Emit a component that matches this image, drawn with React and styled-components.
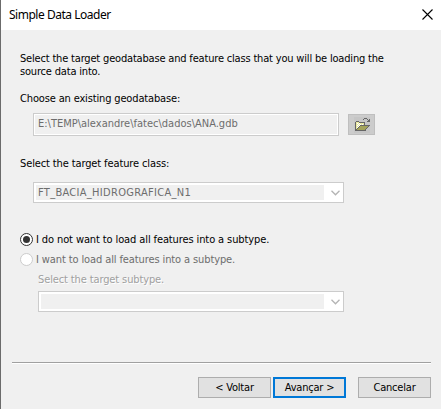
import React from 'react';
import styled, { createGlobalStyle } from 'styled-components';

const GlobalStyle = createGlobalStyle`
  * { box-sizing: border-box; }
  body { margin: 0; background: #f0f0f0; }
`;

const Dialog = styled.main`
  width: 441px;
  height: 409px;
  border-left: 1px solid #6b6b6b;
  background: #f0f0f0;
  color: #000;
  font: 11px/13px "DejaVu Sans Condensed", "DejaVu Sans", sans-serif;
  overflow: hidden;
`;

const TitleBar = styled.header`
  display: flex;
  justify-content: space-between;
  align-items: center;
  height: 30px;
  padding: 0 8px;
  background: #fff;
`;

const Title = styled.h1`
  margin: 0;
  font: 400 12px/16px "Noto Sans", sans-serif;
  letter-spacing: -0.48px;
  white-space: nowrap;
`;

const CloseButton = styled.button`
  display: flex;
  width: 11px;
  height: 11px;
  margin: -1px 0 0 0;
  padding: 0;
  border: 0;
  background: none;
`;

const Content = styled.section`
  height: 332px;
  padding: 22px 0 0 19px;
`;

const Text = styled.div`
  height: 13px;
  white-space: nowrap;
  letter-spacing: ${(p) => p.$spacing || 0}px;
`;

const FieldLabel = styled(Text)`
  margin-top: ${(p) => p.$top}px;
`;

const PathRow = styled.div`
  display: flex;
  align-items: center;
  gap: 9px;
  margin: 8px 0 0 13px;
`;

const PathField = styled.div`
  width: 306px;
  height: 23px;
  padding: 3px 0 0 4px;
  border: 1px solid #ccc;
  background: #f0f0f0;
  box-shadow: inset 0 0 0 1px #fff;
  color: #6d6d6d;
`;

const BrowseButton = styled.button`
  display: flex;
  align-items: center;
  justify-content: center;
  width: 27px;
  height: 21px;
  padding: 0;
  border: 1px solid #bfbfbf;
  background: #ccc;
`;

const Combo = styled.div`
  display: flex;
  width: ${(p) => p.$width}px;
  height: 21px;
  margin: ${(p) => p.$margin};
  padding: 2px 0 2px 2px;
  border: 1px solid #ccc;
  background: #fff;
  color: #6d6d6d;
`;

const ComboValue = styled.div`
  flex: 1;
  padding: 1px 0 0 2px;
  background: #f0f0f0;
`;

const ComboArrow = styled.div`
  display: flex;
  align-items: center;
  justify-content: center;
  width: 19px;
  padding-left: 3px;
`;

const RadioRow = styled.div`
  display: flex;
  align-items: center;
  gap: 3px;
  height: 13px;
  margin-top: ${(p) => p.$top}px;
  color: ${(p) => (p.$disabled ? '#6d6d6d' : '#000')};
`;

const Radio = styled.span`
  display: grid;
  place-items: center;
  width: 13px;
  height: 13px;
  border: 1px solid ${(p) => (p.$disabled ? '#ccc' : '#333')};
  border-radius: 50%;
  background: #fff;
  &::after {
    content: '';
    width: 7px;
    height: 7px;
    border-radius: 50%;
    background: ${(p) => (p.$checked ? '#333' : 'transparent')};
  }
`;

const SubtypeLabel = styled(Text)`
  margin: 7px 0 0 18px;
  color: #a0a0a0;
  text-shadow: 1px 1px 0 #fff;
`;

const Footer = styled.footer`
  display: flex;
  gap: 2px;
  width: 419px;
  margin-left: 11px;
  padding-top: 14px;
  border-top: 1px solid #a0a0a0;
  box-shadow: inset 0 1px 0 #fff;
  justify-content: flex-end;
`;

const Button = styled.button`
  width: 73px;
  height: 21px;
  padding: 0;
  margin-left: ${(p) => p.$left || 0}px;
  border: ${(p) => (p.$primary ? '2px solid #0078d7' : '1px solid #adadad')};
  background: #e1e1e1;
  color: #000;
  font: inherit;
  line-height: 13px;
  letter-spacing: -0.2px;
  white-space: nowrap;
`;

const Chevron = () => (
  <svg width="9" height="6" viewBox="0 0 9 6" fill="none" stroke="#b4b4b4" strokeWidth="1.3">
    <path d="M.5 .8 4.5 4.8 8.5 .8" />
  </svg>
);

const FolderIcon = () => (
  <svg width="16" height="16" viewBox="0 0 16 16" shapeRendering="crispEdges">
    <path fill="#c6c6c6" d="M0 0h16v16H0z" />
    <path fill="#e9e9a0" d="M2 5h3v1h6v3H6l-4 4z" />
    <path fill="#fff" d="M3 6h1v1H3zM5 6h1v1H5zM4 7h1v1H4zM6 7h1v1H6zM8 7h1v1H8zM3 8h1v1H3zM5 8h1v1H5zM7 8h1v1H7zM4 9h1v1H4zM3 10h1v1H3z" />
    <path fill="#a3a35a" d="M6 9h9v1h-1v1h-1v1h-1v1H2v-1h1v-1h1v-1h2z" />
    <path fill="#666" d="M2 4h3v1H2zM1 5h1v9H1zM5 5h6v1H5zM10 6h1v2h-1zM6 8h10v1H6zM5 9h1v1H5zM4 10h1v1H4zM3 11h1v1H3zM2 12h1v1H2zM15 9h-1v1h1zM13 10h1v1h-1zM12 11h1v1h-1zM11 12h1v1h-1zM2 13h10v1H2zM9 2h1v1H9zM10 1h3v1h-3zM13 2h1v1h-1zM14 3h1v1h-1zM15 2h1v3h-1zM13 4h2v1h-2z" />
  </svg>
);

export default function App() {
  return (
    <>
      <GlobalStyle />
      <Dialog>
        <TitleBar>
          <Title>Simple Data Loader</Title>
          <CloseButton aria-label="Close">
            <svg width="11" height="11" viewBox="0 0 11 11" stroke="#000" strokeWidth="1.1">
              <path d="M.5 .5 10.5 10.5M10.5 .5 .5 10.5" />
            </svg>
          </CloseButton>
        </TitleBar>
        <Content>
          <Text $spacing={-0.18}>Select the target geodatabase and feature class that you will be loading the</Text>
          <Text $spacing={-0.18}>source data into.</Text>
          <FieldLabel $top={14} $spacing={-0.15}>Choose an existing geodatabase:</FieldLabel>
          <PathRow>
            <PathField><Text>E:\TEMP\alexandre\fatec\dados\ANA.gdb</Text></PathField>
            <BrowseButton aria-label="Browse"><FolderIcon /></BrowseButton>
          </PathRow>
          <FieldLabel $top={21} $spacing={-0.12}>Select the target feature class:</FieldLabel>
          <Combo $width={311} $margin="12px 0 0 13px">
            <ComboValue><Text $spacing={0.3}>FT_BACIA_HIDROGRAFICA_N1</Text></ComboValue>
            <ComboArrow><Chevron /></ComboArrow>
          </Combo>
          <RadioRow $top={30}>
            <Radio $checked />
            <Text $spacing={-0.11}>I do not want to load all features into a subtype.</Text>
          </RadioRow>
          <RadioRow $top={7} $disabled>
            <Radio $disabled />
            <Text $spacing={-0.11}>I want to load all features into a subtype.</Text>
          </RadioRow>
          <SubtypeLabel $spacing={-0.12}>Select the target subtype.</SubtypeLabel>
          <Combo $width={306} $margin="5px 0 0 18px">
            <ComboValue />
            <ComboArrow><Chevron /></ComboArrow>
          </Combo>
        </Content>
        <Footer>
          <Button>&lt; Voltar</Button>
          <Button $primary>Avançar &gt;</Button>
          <Button $left={10}>Cancelar</Button>
        </Footer>
      </Dialog>
    </>
  );
}
